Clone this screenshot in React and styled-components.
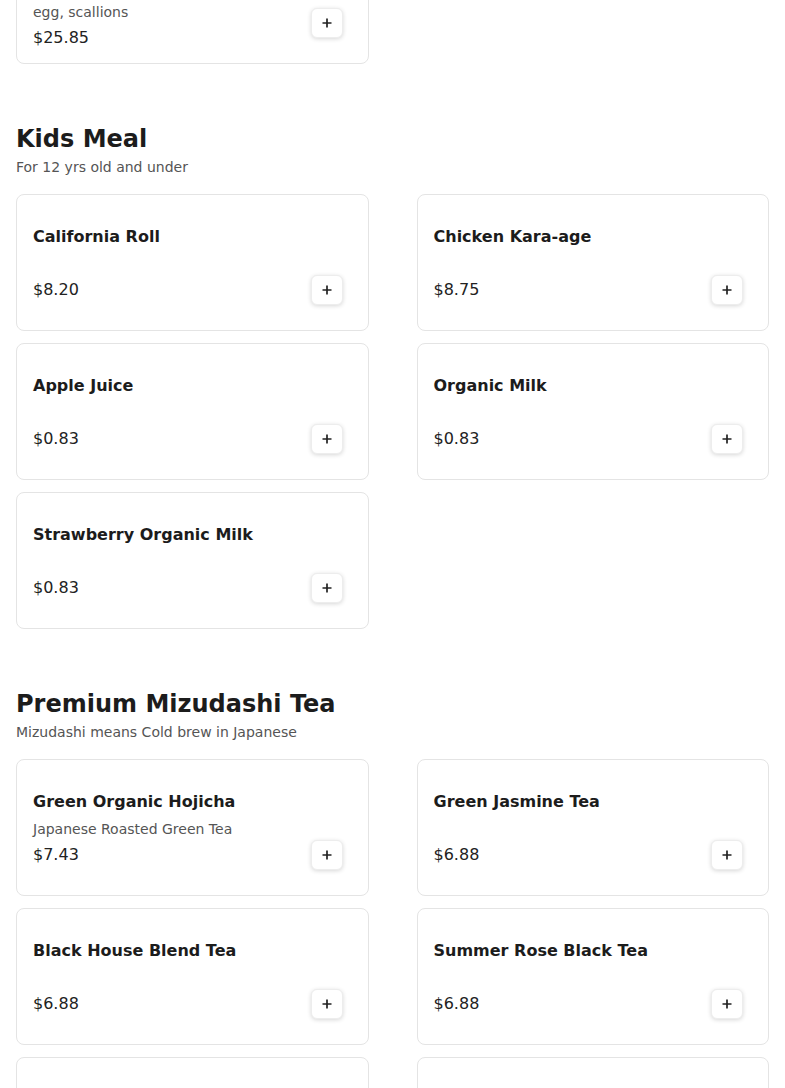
import React from "react";
import styled, { createGlobalStyle } from "styled-components";

const GlobalStyle = createGlobalStyle`
  * { box-sizing: border-box; }
  html, body { margin: 0; padding: 0; background: #ffffff; }
  body {
    font-family: "DejaVu Sans", "Liberation Sans", sans-serif;
    color: #1c1c1c;
    overflow: hidden;
  }
`;

const Page = styled.main`
  margin-top: -153px;
  padding: 0 16px 40px;
  display: flex;
  flex-direction: column;
  gap: 60px;
`;

const Section = styled.section`
  display: flex;
  flex-direction: column;
`;

const SectionTitle = styled.h2`
  margin: 0;
  font-size: 24px;
  line-height: 30px;
  font-weight: 700;
  color: #1c1c1c;
`;

const SectionSubtitle = styled.p`
  margin: 3px 0 0;
  font-size: 14px;
  line-height: 20px;
  color: #555555;
`;

const Grid = styled.div`
  margin-top: 17px;
  display: grid;
  grid-template-columns: 1fr 1fr;
  column-gap: 48px;
  row-gap: 12px;
`;

const Card = styled.article`
  min-height: 137px;
  border: 1px solid #e4e4e4;
  border-radius: 8px;
  background: #ffffff;
  padding: 15px 16px 13px;
  display: flex;
  gap: 12px;
`;

const Info = styled.div`
  flex: 1;
  min-width: 0;
  align-self: center;
  display: flex;
  flex-direction: column;
`;

const ItemName = styled.h3`
  margin: 0;
  font-size: 16px;
  line-height: 24px;
  font-weight: 700;
  color: #1c1c1c;
`;

const ItemDesc = styled.p`
  margin: 5px 0 0;
  min-height: 20px;
  font-size: 14px;
  line-height: 20px;
  color: #555555;
`;

const Price = styled.span`
  margin-top: 4px;
  font-size: 16px;
  line-height: 24px;
  color: #222222;
`;

const AddButton = styled.button`
  align-self: flex-end;
  flex: none;
  width: 32px;
  height: 30px;
  margin: 0 9px 12px 0;
  padding: 0;
  border: 1px solid #ededed;
  border-radius: 6px;
  background: #ffffff;
  box-shadow: 0 1px 4px rgba(0, 0, 0, 0.16);
  display: flex;
  align-items: center;
  justify-content: center;
  color: #222222;
  cursor: pointer;
`;

const PlusIcon = () => (
  <svg width="10" height="10" viewBox="0 0 10 10" aria-hidden="true">
    <path d="M5 0.5v9M0.5 5h9" stroke="currentColor" strokeWidth="1.7" fill="none" />
  </svg>
);

const sections = [
  {
    title: "Ramen",
    subtitle: "Served with house-made noodles",
    items: [
      {
        name: "Tonkotsu Ramen",
        desc: "Rich pork bone broth topped with thick-cut chashu belly, soft-poached egg, scallions",
        price: "$25.85",
      },
    ],
  },
  {
    title: "Kids Meal",
    subtitle: "For 12 yrs old and under",
    items: [
      { name: "California Roll", price: "$8.20" },
      { name: "Chicken Kara-age", price: "$8.75" },
      { name: "Apple Juice", price: "$0.83" },
      { name: "Organic Milk", price: "$0.83" },
      { name: "Strawberry Organic Milk", price: "$0.83" },
    ],
  },
  {
    title: "Premium Mizudashi Tea",
    subtitle: "Mizudashi means Cold brew in Japanese",
    items: [
      { name: "Green Organic Hojicha", desc: "Japanese Roasted Green Tea", price: "$7.43" },
      { name: "Green Jasmine Tea", price: "$6.88" },
      { name: "Black House Blend Tea", price: "$6.88" },
      { name: "Summer Rose Black Tea", price: "$6.88" },
      { name: "Peach Oolong Tea", price: "$6.88" },
      { name: "Sencha Green Tea", price: "$6.88" },
    ],
  },
];

function MenuCard({ item }) {
  return (
    <Card>
      <Info>
        <ItemName>{item.name}</ItemName>
        <ItemDesc>{item.desc || ""}</ItemDesc>
        <Price>{item.price}</Price>
      </Info>
      <AddButton type="button" aria-label={`Add ${item.name}`}>
        <PlusIcon />
      </AddButton>
    </Card>
  );
}

export default function App() {
  return (
    <>
      <GlobalStyle />
      <Page>
        {sections.map((section) => (
          <Section key={section.title}>
            <SectionTitle>{section.title}</SectionTitle>
            <SectionSubtitle>{section.subtitle}</SectionSubtitle>
            <Grid>
              {section.items.map((item) => (
                <MenuCard key={item.name} item={item} />
              ))}
            </Grid>
          </Section>
        ))}
      </Page>
    </>
  );
}
